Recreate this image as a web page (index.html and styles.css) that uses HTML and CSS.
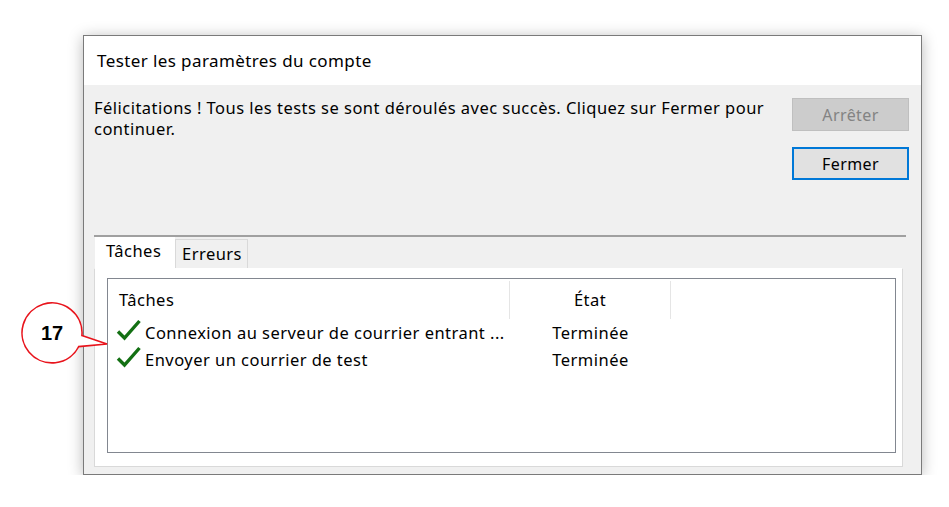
FILE: index.html
```html
<!DOCTYPE html>
<html lang="fr">
<head>
    <meta charset="UTF-8">
    <link rel="stylesheet" href="styles.css">
    <title>Tester les paramètres du compte</title>
</head>
<body>
<div id="dialog">
    <div class="titlebar">Tester les paramètres du compte</div>
    <div class="body">
        <div class="top">
            <p class="message">Félicitations ! Tous les tests se sont déroulés avec succès. Cliquez sur Fermer pour<br>continuer.</p>
            <div class="buttons">
                <button class="btn disabled">Arrêter</button>
                <button class="btn focused">Fermer</button>
            </div>
        </div>
        <div class="separator"></div>
        <div class="tabs">
            <div class="tab active">Tâches</div>
            <div class="tab">Erreurs</div>
        </div>
        <div class="panel">
            <div class="listbox">
                <div class="row header">
                    <div class="col name">Tâches</div>
                    <div class="col state">État</div>
                    <div class="col rest"></div>
                </div>
                <!-- lignes des tâches -->
                <div class="row">
                    <div class="col name"><svg class="check" width="25" height="22" viewBox="0 0 25 22"><path d="M2 12.5 L8.5 19 L23.5 2" fill="none" stroke="#137013" stroke-width="3.4" stroke-linejoin="miter"/></svg>Connexion au serveur de courrier entrant ...</div>
                    <div class="col state">Terminée</div>
                </div>
                <div class="row">
                    <div class="col name"><svg class="check" width="25" height="22" viewBox="0 0 25 22"><path d="M2 12.5 L8.5 19 L23.5 2" fill="none" stroke="#137013" stroke-width="3.4" stroke-linejoin="miter"/></svg>Envoyer un courrier de test</div>
                    <div class="col state">Terminée</div>
                </div>
            </div>
        </div>
    </div>
</div>

<!-- bulle numérotée -->
<div class="callout">
    <svg width="92" height="70" viewBox="0 0 92 70">
        <path d="M61.9 35.6 L87 44 L58.7 46.6 A30 30 0 1 1 61.9 35.6 Z" fill="#fff" stroke="#e8141c" stroke-width="1.6"/>
    </svg>
    <span class="num">17</span>
</div>
</body>
</html>
```
FILE: styles.css
```css
* {
    margin: 0;
    padding: 0;
    box-sizing: border-box;
}

body {
    background: #fff;
    font-family: "Noto Sans", "Open Sans", sans-serif;
    font-size: 16.5px;
    letter-spacing: 0.47px;
    color: #000;
}

#dialog {
    margin: 35px 0 0 83px;
    width: 839px;
    height: 440px;
    border: 1px solid #7a7a7a;
    background: #f0f0f0;
    box-shadow: 0 2px 14px rgba(0, 0, 0, 0.28);
    display: flex;
    flex-direction: column;
}

.titlebar {
    height: 49px;
    background: #fff;
    padding: 14px 0 0 13px;
    font-size: 17px;
    letter-spacing: 0.4px;
    line-height: 22px;
}

.body {
    flex: 1;
    display: flex;
    flex-direction: column;
    padding: 0 12px 7px 10px;
}

.top {
    height: 150px;
    display: flex;
    justify-content: space-between;
}

.message {
    padding-top: 12px;
    line-height: 21px;
}

.buttons {
    padding-top: 13px;
    display: flex;
    flex-direction: column;
    gap: 16px;
}

.btn {
    width: 117px;
    height: 33px;
    font-family: inherit;
    font-size: 16px;
    letter-spacing: 0.4px;
    border: 1px solid #adadad;
    background: #e1e1e1;
    color: #000;
}

.btn.disabled {
    background: #cccccc;
    border-color: #bfbfbf;
    color: #838383;
}

.btn.focused {
    border: 2px solid #0078d7;
}

.separator {
    height: 2px;
    background: #a0a0a0;
    margin-right: 3px;
}

.tabs {
    display: flex;
    align-items: flex-end;
    height: 31px;
    padding-left: 1px;
}

.tab {
    height: 29px;
    padding: 2px 5px 0 6px;
    border: 1px solid #d9d9d9;
    border-bottom: none;
    background: #f0f0f0;
    line-height: 24px;
}

.tab.active {
    height: 31px;
    width: 80px;
    padding: 0 0 0 10px;
    background: #fff;
    border-color: #fff;
    line-height: 26px;
}

.panel {
    flex: 1;
    margin-right: 6px;
    border: 1px solid #d9d9d9;
    border-top-color: #fff;
    background: #fff;
    padding: 9px 6px 13px 12px;
}

.listbox {
    height: 100%;
    border: 1px solid #828790;
    background: #fff;
}

.row {
    display: flex;
    height: 27px;
    line-height: 27px;
}

.row.header {
    height: 40px;
    line-height: 38px;
    padding-top: 2px;
}

.col.name {
    width: 402px;
    padding-left: 8px;
    display: flex;
    align-items: center;
    white-space: nowrap;
}

.header .col.name {
    padding-left: 11px;
}

.col.state {
    width: 161px;
    text-align: center;
}

.header .col {
    border-right: 1px solid #e5e5e5;
}

.header .col.rest {
    border-right: none;
}

.check {
    margin-right: 4px;
    margin-top: -5px;
    flex-shrink: 0;
}

.callout {
    position: absolute;
    left: 20px;
    top: 300px;
    width: 92px;
    height: 70px;
}

.callout svg {
    display: block;
}

.callout .num {
    position: absolute;
    left: 2px;
    top: 19px;
    width: 60px;
    text-align: center;
    font-family: "Liberation Sans", Arial, sans-serif;
    font-weight: bold;
    font-size: 20px;
    letter-spacing: 0;
    line-height: 28px;
}
```
